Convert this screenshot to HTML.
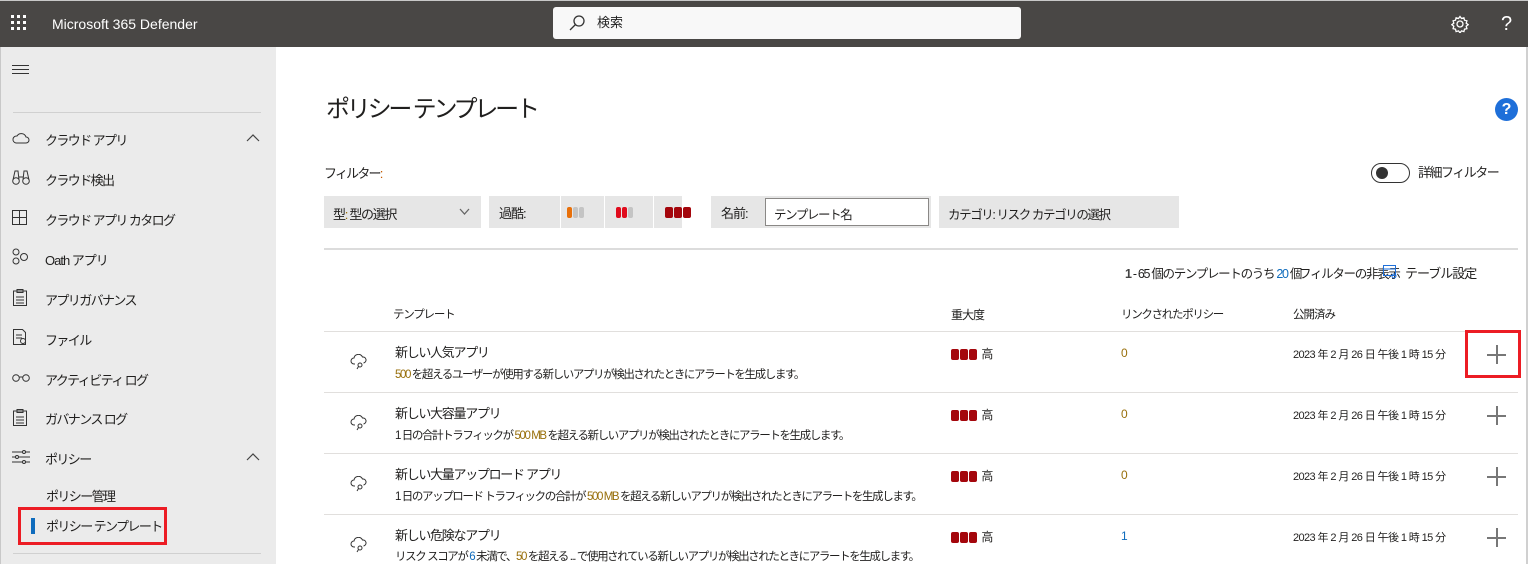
<!DOCTYPE html>
<html><head><meta charset="utf-8"><style>
*{margin:0;padding:0;box-sizing:border-box}
body{width:1528px;height:564px;overflow:hidden;background:#fff;font-family:"Liberation Sans","Noto Sans CJK JP",sans-serif;color:#201f1e;position:relative;font-size:12px;letter-spacing:-1px}
.a{position:absolute;white-space:nowrap}
#hdr{left:0;top:0;width:1528px;height:47px;background:#494745;border-top:1px solid #c8c8c8;letter-spacing:0}
#side{left:0;top:47px;width:276px;height:517px;background:#ebebeb;border-left:1px solid #c8c8c8}
.nav{font-size:13px;color:#201f1e;letter-spacing:-1.6px}
.hr{position:absolute;left:324px;width:1194px;height:1px;background:#e1dfdd}
.pill{position:absolute;height:32px;background:#e6e6e6;top:196px}
.bar{display:inline-block;width:5px;height:11px;border-radius:2px;margin-right:1px;vertical-align:top}
.sev{display:inline-block;width:8px;height:11px;background:#a4060c;margin-right:1px;border-radius:2px;vertical-align:middle}
.t1{font-size:13px;letter-spacing:-1.3px}
.t2{font-size:11.5px;letter-spacing:-1.4px}
.o{color:#986f0b}
.d{font-size:11px;letter-spacing:-0.6px}
.plus{position:absolute;left:1487px;width:19px;height:19px}
.plus:before{content:"";position:absolute;left:0;top:9px;width:19px;height:2px;background:#777}
.plus:after{content:"";position:absolute;left:9px;top:0;width:2px;height:19px;background:#777}
</style></head><body>
<div id="hdr" class="a">
 <svg class="a" style="left:11px;top:14px" width="16" height="16" viewBox="0 0 16 16" fill="#fff"><rect x="0" y="0" width="3" height="3"/><rect x="6" y="0" width="3" height="3"/><rect x="12" y="0" width="3" height="3"/><rect x="0" y="6" width="3" height="3"/><rect x="6" y="6" width="3" height="3"/><rect x="12" y="6" width="3" height="3"/><rect x="0" y="12" width="3" height="3"/><rect x="6" y="12" width="3" height="3"/><rect x="12" y="12" width="3" height="3"/></svg>
 <div class="a" style="left:52px;top:15px;color:#fff;font-size:14px">Microsoft 365 Defender</div>
 <div class="a" style="left:553px;top:6px;width:468px;height:32px;background:#f8f8f8;border-radius:3px"></div>
 <svg class="a" style="left:568px;top:13px" width="18" height="18" viewBox="0 0 18 18" fill="none" stroke="#333" stroke-width="1.3"><circle cx="11" cy="7" r="5"/><line x1="7.5" y1="10.5" x2="2" y2="16"/></svg>
 <div class="a" style="left:597px;top:11px;font-size:13px;color:#222">検索</div>
 <svg class="a" style="left:1451px;top:14px" width="18" height="18" viewBox="0 0 18 18" fill="none" stroke="#fff" stroke-width="1.3"><circle cx="9" cy="9" r="3"/><path d="M9 1.5l1.5 2 2.4-.7.6 2.4 2.4.6-.7 2.4 2 1.5-2 1.5.7 2.4-2.4.6-.6 2.4-2.4-.7-1.5 2-1.5-2-2.4.7-.6-2.4-2.4-.6.7-2.4-2-1.5 2-1.5-.7-2.4 2.4-.6.6-2.4 2.4.7z"/></svg>
 <div class="a" style="left:1501px;top:12px;color:#fff;font-size:20px">?</div>
</div>
<div id="side" class="a">
 <div class="a" style="left:11px;top:18px;width:17px;height:1px;background:#333;box-shadow:0 4px 0 #333,0 8px 0 #333"></div>
 <div class="a" style="left:12px;top:65px;width:248px;height:1px;background:#d0d0d0"></div>
 <svg class="a" style="left:11px;top:85px" width="18" height="12" viewBox="0 0 18 12" fill="none" stroke="#333"><path d="M4 11h10a3 3 0 0 0 0-6 5 5 0 0 0-9-1 3.5 3.5 0 0 0-1 7z"/></svg>
 <div class="a nav" style="left:44px;top:83px">クラウド アプリ</div>
 <svg class="a" style="left:245px;top:87px" width="14" height="8" viewBox="0 0 14 8" fill="none" stroke="#444" stroke-width="1.2"><path d="M1 7l6-6 6 6"/></svg>
 <svg class="a" style="left:11px;top:122px" width="18" height="16" viewBox="0 0 18 16" fill="none" stroke="#333"><circle cx="4" cy="12" r="3.3"/><circle cx="14" cy="12" r="3.3"/><path d="M1 11l2-9h3l1 9M17 11l-2-9h-3l-1 9M7 8h4"/></svg>
 <div class="a nav" style="left:44px;top:123px">クラウド検出</div>
 <svg class="a" style="left:11px;top:163px" width="18" height="16" viewBox="0 0 18 16" fill="none" stroke="#333"><rect x=".5" y=".5" width="14" height="14"/><line x1="7.5" y1="0" x2="7.5" y2="15"/><line x1="0" y1="7.5" x2="15" y2="7.5"/></svg>
 <div class="a nav" style="left:44px;top:163px">クラウド アプリ カタログ</div>
 <svg class="a" style="left:11px;top:201px" width="18" height="18" viewBox="0 0 18 18" fill="none" stroke="#333"><circle cx="4" cy="4" r="3"/><circle cx="4" cy="13" r="3"/><circle cx="12" cy="9" r="3.5"/></svg>
 <div class="a nav" style="left:44px;top:203px;letter-spacing:-1px">Oath アプリ</div>
 <svg class="a" style="left:12px;top:242px" width="14" height="17" viewBox="0 0 14 17" fill="none" stroke="#333"><rect x=".5" y="2" width="13" height="14.5"/><rect x="4" y=".5" width="6" height="3"/><line x1="3" y1="8" x2="11" y2="8"/><line x1="3" y1="11" x2="11" y2="11"/><line x1="3" y1="14" x2="11" y2="14"/></svg>
 <div class="a nav" style="left:44px;top:243px">アプリガバナンス</div>
 <svg class="a" style="left:12px;top:282px" width="16" height="17" viewBox="0 0 16 17" fill="none" stroke="#333"><path d="M.5 .5h9l3 3v12H.5z"/><line x1="3" y1="6" x2="9" y2="6"/><line x1="3" y1="9" x2="9" y2="9"/><circle cx="10" cy="12" r="2.5"/></svg>
 <div class="a nav" style="left:44px;top:283px">ファイル</div>
 <svg class="a" style="left:11px;top:326px" width="18" height="10" viewBox="0 0 18 10" fill="none" stroke="#333"><circle cx="4" cy="5" r="3.3"/><circle cx="14" cy="5" r="3.3"/><line x1="7" y1="4" x2="11" y2="4"/></svg>
 <div class="a nav" style="left:44px;top:323px">アクティビティ ログ</div>
 <svg class="a" style="left:12px;top:362px" width="14" height="17" viewBox="0 0 14 17" fill="none" stroke="#333"><rect x=".5" y="2" width="13" height="14.5"/><rect x="4" y=".5" width="6" height="3"/><line x1="3" y1="8" x2="11" y2="8"/><line x1="3" y1="11" x2="11" y2="11"/><line x1="3" y1="14" x2="11" y2="14"/></svg>
 <div class="a nav" style="left:44px;top:362px">ガバナンス ログ</div>
 <svg class="a" style="left:11px;top:403px" width="18" height="14" viewBox="0 0 18 14" fill="none" stroke="#333"><line x1="0" y1="2" x2="18" y2="2"/><line x1="0" y1="7" x2="18" y2="7"/><line x1="0" y1="12" x2="18" y2="12"/><circle cx="12" cy="2" r="1.5" fill="#ebebeb"/><circle cx="5" cy="7" r="1.5" fill="#ebebeb"/><circle cx="12" cy="12" r="1.5" fill="#ebebeb"/></svg>
 <div class="a nav" style="left:44px;top:402px">ポリシー</div>
 <svg class="a" style="left:245px;top:406px" width="14" height="8" viewBox="0 0 14 8" fill="none" stroke="#444" stroke-width="1.2"><path d="M1 7l6-6 6 6"/></svg>
 <div class="a nav" style="left:45px;top:439px">ポリシー管理</div>
 <div class="a" style="left:17px;top:460px;width:149px;height:38px;border:3px solid #ec1c24"></div>
 <div class="a" style="left:30px;top:471px;width:4px;height:16px;background:#0f6cbd"></div>
 <div class="a nav" style="left:45px;top:469px">ポリシー テンプレート</div>
 <div class="a" style="left:12px;top:506px;width:248px;height:1px;background:#d0d0d0"></div>
</div>
<div class="a" style="left:1526px;top:47px;width:2px;height:517px;background:#d0d0d0"></div>

<div class="a" style="left:326px;top:89px;font-size:24px;letter-spacing:-3.2px">ポリシー テンプレート</div>
<div class="a" style="left:1495px;top:98px;width:23px;height:23px;border-radius:50%;background:#1e6fd9;color:#fff;font-weight:bold;font-size:16px;text-align:center;line-height:23px;letter-spacing:0">?</div>
<div class="a" style="left:324px;top:163px;font-size:13px;letter-spacing:-1.8px">フィルター<span style="color:#c55a00">:</span></div>
<div class="a" style="left:1371px;top:163px;width:39px;height:20px;border:1.5px solid #333;border-radius:10px"></div>
<div class="a" style="left:1376px;top:167px;width:12px;height:12px;border-radius:50%;background:#333"></div>
<div class="a" style="left:1418px;top:162px;font-size:13px;letter-spacing:-1.5px">詳細フィルター</div>

<div class="pill" style="left:324px;width:157px"></div>
<div class="a" style="left:333px;top:204px;font-size:13px;letter-spacing:-1.3px">型<span class="o">:</span> 型の選択</div>
<svg class="a" style="left:459px;top:208px" width="11" height="8" viewBox="0 0 11 8" fill="none" stroke="#666" stroke-width="1.3"><path d="M1 1l4.5 5L10 1"/></svg>
<div class="pill" style="left:489px;width:193px"></div>
<div class="a" style="left:560px;top:196px;width:1px;height:32px;background:#fff"></div>
<div class="a" style="left:604px;top:196px;width:1px;height:32px;background:#fff"></div>
<div class="a" style="left:653px;top:196px;width:1px;height:32px;background:#fff"></div>
<div class="a" style="left:499px;top:203px;font-size:13px">過酷:</div>
<div class="a" style="left:567px;top:207px;font-size:0"><span class="bar" style="background:#e8700a"></span><span class="bar" style="background:#c4c4c4"></span><span class="bar" style="background:#c4c4c4"></span></div>
<div class="a" style="left:616px;top:207px;font-size:0"><span class="bar" style="background:#e00b1c"></span><span class="bar" style="background:#e00b1c"></span><span class="bar" style="background:#c4c4c4"></span></div>
<div class="a" style="left:665px;top:207px;font-size:0"><span class="bar" style="background:#a4060c;width:8px"></span><span class="bar" style="background:#a4060c;width:8px"></span><span class="bar" style="background:#a4060c;width:8px"></span></div>
<div class="pill" style="left:711px;width:220px"></div>
<div class="a" style="left:721px;top:203px;font-size:13px">名前:</div>
<div class="a" style="left:765px;top:198px;width:164px;height:28px;background:#fff;border:1px solid #8a8886"></div>
<div class="a" style="left:774px;top:204px;font-size:12.5px;letter-spacing:-1.4px">テンプレート名</div>
<div class="pill" style="left:939px;width:240px"></div>
<div class="a" style="left:948px;top:204px;font-size:12.5px;letter-spacing:-1.4px">カテゴリ: リスク カテゴリの選択</div>

<div class="a" style="left:324px;top:248px;width:1194px;height:2px;background:#dcdcdc"></div>
<div class="a" style="left:1125px;top:263px;font-size:12.5px;letter-spacing:-1.3px"><b style="color:#444">1</b> - 65 個のテンプレートのうち <span style="color:#0f6cbd">20</span> 個</div>
<div class="a" style="left:1299px;top:263px;font-size:12.5px;letter-spacing:-1.3px">フィルターの非表示</div>
<svg class="a" style="left:1383px;top:265px" width="14" height="14" viewBox="0 0 14 14" fill="none" stroke="#1e6fd9"><rect x=".5" y=".5" width="12" height="10"/><line x1="0" y1="4" x2="13" y2="4"/><circle cx="11" cy="11" r="2"/></svg>
<div class="a" style="left:1405px;top:263px;font-size:13px;letter-spacing:-1px">テーブル設定</div>

<div class="a" style="left:393px;top:306px;font-size:11.5px;letter-spacing:-1.2px">テンプレート</div>
<div class="a" style="left:951px;top:306px;font-size:12px">重大度</div>
<div class="a" style="left:1121px;top:306px;font-size:11.5px;letter-spacing:-1.3px">リンクされたポリシー</div>
<div class="a" style="left:1293px;top:306px;font-size:11.5px">公開済み</div>
<div class="hr" style="top:331px"></div>
<div class="hr" style="top:392px"></div>
<div class="hr" style="top:453px"></div>
<div class="hr" style="top:514px"></div>

<div class="a t1" style="left:395px;top:342px">新しい人気アプリ</div>
<div class="a t2" style="left:395px;top:366px"><span class="o">500</span> を超えるユーザーが使用する新しいアプリが検出されたときにアラートを生成します。</div>
<div class="a t1" style="left:395px;top:403px">新しい大容量アプリ</div>
<div class="a t2" style="left:395px;top:427px">1 日の合計トラフィックが <span class="o">500 MB</span> を超える新しいアプリが検出されたときにアラートを生成します。</div>
<div class="a t1" style="left:395px;top:464px">新しい大量アップロード アプリ</div>
<div class="a t2" style="left:395px;top:488px">1 日のアップロード トラフィックの合計が <span class="o">500 MB</span> を超える新しいアプリが検出されたときにアラートを生成します。</div>
<div class="a t1" style="left:395px;top:525px">新しい危険なアプリ</div>
<div class="a t2" style="left:395px;top:548px">リスク スコアが <span style="color:#0f6cbd">6</span> 未満で、<span class="o">50</span> を超える ... で使用されている新しいアプリが検出されたときにアラートを生成します。</div>

<svg class="a" style="left:350px;top:354px" width="18" height="16" viewBox="0 0 18 16" fill="none" stroke="#333"><path d="M5 10H4a3 3 0 0 1 0-6 4.5 4.5 0 0 1 8.5-1 3 3 0 0 1 1 6"/><circle cx="10" cy="11" r="2"/><line x1="8.5" y1="12.5" x2="7" y2="15"/></svg>
<svg class="a" style="left:350px;top:415px" width="18" height="16" viewBox="0 0 18 16" fill="none" stroke="#333"><path d="M5 10H4a3 3 0 0 1 0-6 4.5 4.5 0 0 1 8.5-1 3 3 0 0 1 1 6"/><circle cx="10" cy="11" r="2"/><line x1="8.5" y1="12.5" x2="7" y2="15"/></svg>
<svg class="a" style="left:350px;top:476px" width="18" height="16" viewBox="0 0 18 16" fill="none" stroke="#333"><path d="M5 10H4a3 3 0 0 1 0-6 4.5 4.5 0 0 1 8.5-1 3 3 0 0 1 1 6"/><circle cx="10" cy="11" r="2"/><line x1="8.5" y1="12.5" x2="7" y2="15"/></svg>
<svg class="a" style="left:350px;top:537px" width="18" height="16" viewBox="0 0 18 16" fill="none" stroke="#333"><path d="M5 10H4a3 3 0 0 1 0-6 4.5 4.5 0 0 1 8.5-1 3 3 0 0 1 1 6"/><circle cx="10" cy="11" r="2"/><line x1="8.5" y1="12.5" x2="7" y2="15"/></svg>

<div class="a" style="left:951px;top:345px;font-size:12px;letter-spacing:0"><span class="sev"></span><span class="sev"></span><span class="sev"></span> 高</div>
<div class="a" style="left:951px;top:406px;font-size:12px;letter-spacing:0"><span class="sev"></span><span class="sev"></span><span class="sev"></span> 高</div>
<div class="a" style="left:951px;top:467px;font-size:12px;letter-spacing:0"><span class="sev"></span><span class="sev"></span><span class="sev"></span> 高</div>
<div class="a" style="left:951px;top:528px;font-size:12px;letter-spacing:0"><span class="sev"></span><span class="sev"></span><span class="sev"></span> 高</div>

<div class="a" style="left:1121px;top:346px;font-size:12px"><span class="o">0</span></div>
<div class="a" style="left:1121px;top:407px;font-size:12px"><span class="o">0</span></div>
<div class="a" style="left:1121px;top:468px;font-size:12px"><span class="o">0</span></div>
<div class="a" style="left:1121px;top:529px;font-size:12px;color:#0f6cbd">1</div>

<div class="a d" style="left:1293px;top:346px">2023 年 2 月 26 日 午後 1 時 15 分</div>
<div class="a d" style="left:1293px;top:407px">2023 年 2 月 26 日 午後 1 時 15 分</div>
<div class="a d" style="left:1293px;top:468px">2023 年 2 月 26 日 午後 1 時 15 分</div>
<div class="a d" style="left:1293px;top:529px">2023 年 2 月 26 日 午後 1 時 15 分</div>

<div class="a" style="left:1465px;top:330px;width:56px;height:48px;border:3px solid #ec1c24"></div>
<div class="plus" style="top:345px"></div>
<div class="plus" style="top:406px"></div>
<div class="plus" style="top:467px"></div>
<div class="plus" style="top:528px"></div>
</body></html>
